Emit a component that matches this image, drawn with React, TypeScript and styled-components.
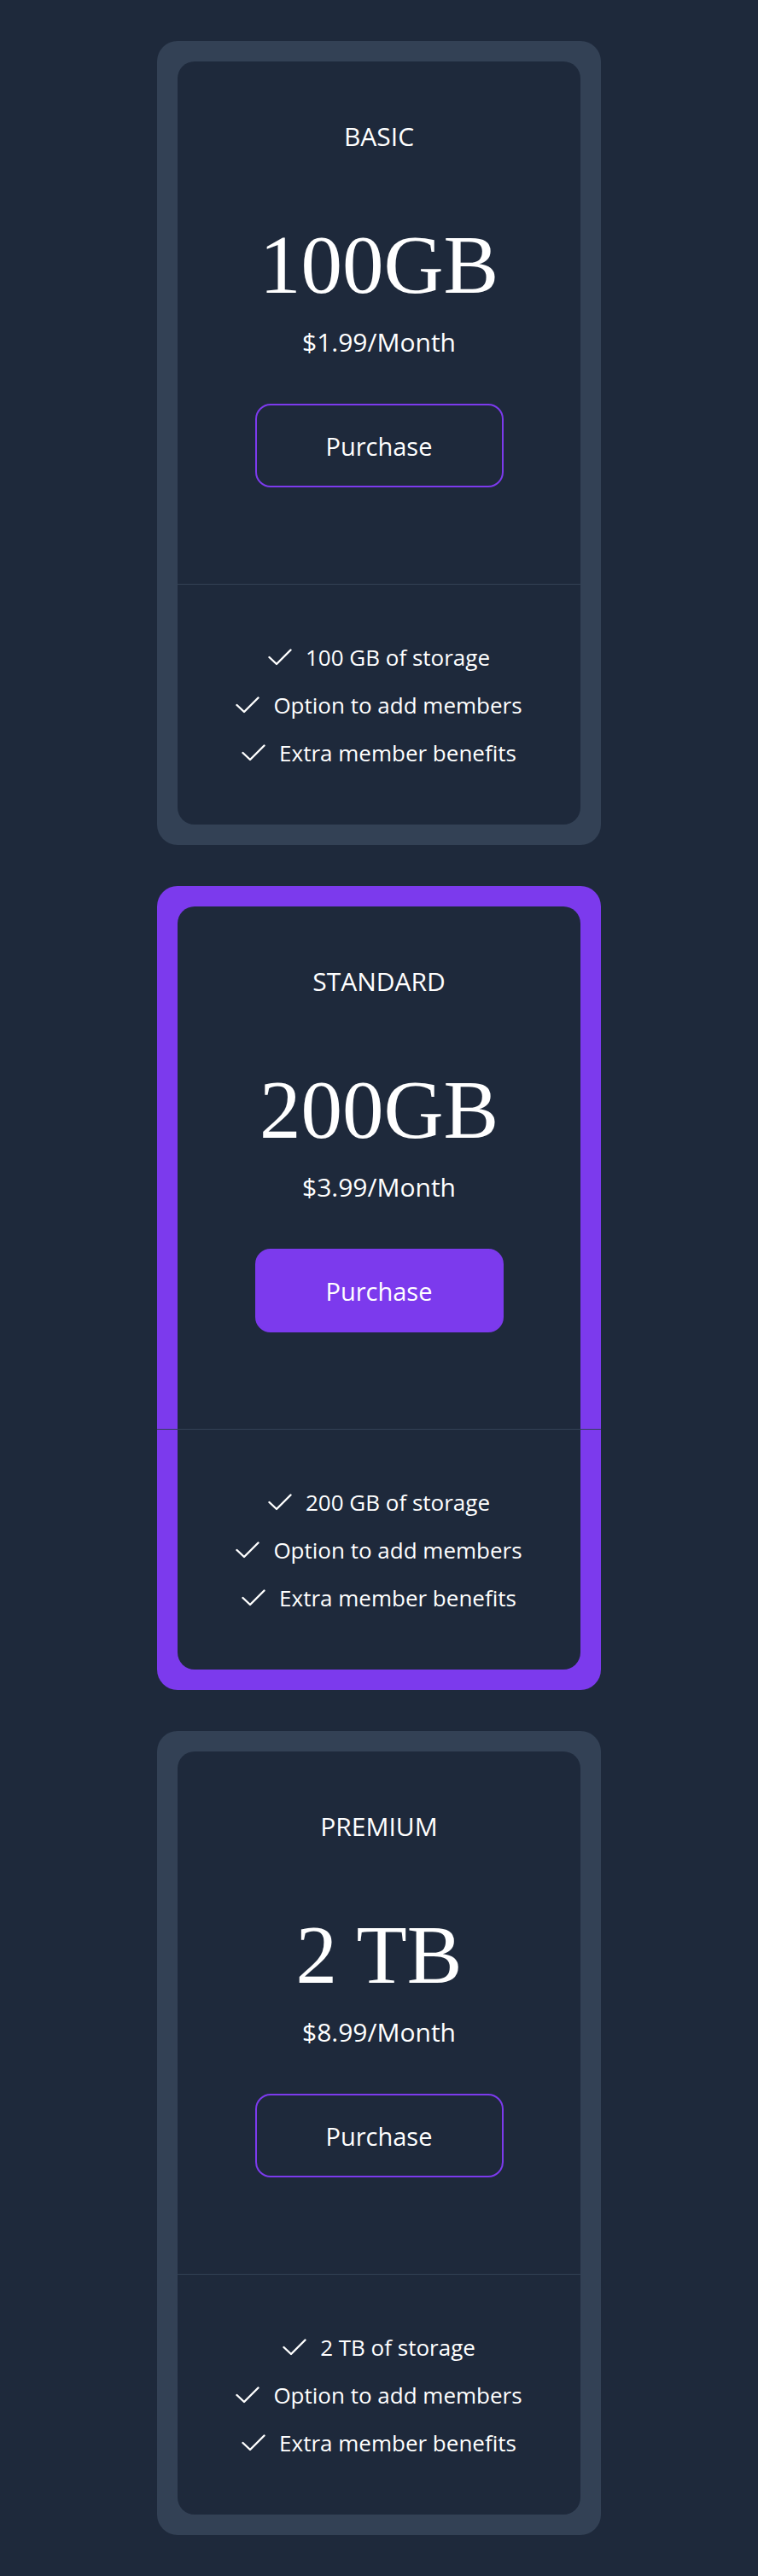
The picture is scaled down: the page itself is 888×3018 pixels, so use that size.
import React from "react";
import styled, { createGlobalStyle } from "styled-components";

const GlobalStyle = createGlobalStyle`
  html, body {
    margin: 0;
    padding: 0;
    background: #1e293b;
  }
  body {
    font-family: "Open Sans", "Noto Sans", Arial, sans-serif;
    color: #ffffff;
  }
  * { box-sizing: border-box; }
`;

const Page = styled.main`
  display: flex;
  flex-direction: column;
  align-items: center;
  gap: 48px;
  padding: 48px 0;
`;

const Card = styled.section<{ $featured?: boolean }>`
  width: 520px;
  padding: 24px;
  border-radius: 24px;
  background: ${(p) => (p.$featured ? "#7c3aed" : "#334155")};
`;

const Inner = styled.div`
  background: #1e293b;
  border-radius: 20px;
  display: flex;
  flex-direction: column;
`;

const Top = styled.div`
  display: flex;
  flex-direction: column;
  align-items: center;
  padding: 68px 0 113px;
`;

const Tier = styled.h2`
  margin: 0;
  font-size: 30px;
  line-height: 40px;
  font-weight: 400;
  text-transform: uppercase;
`;

const Amount = styled.div`
  margin-top: 83px;
  font-family: "Liberation Serif", "Times New Roman", serif;
  font-size: 97px;
  line-height: 96px;
  height: 96px;
  font-weight: 400;
  white-space: nowrap;
`;

const Price = styled.div`
  margin-top: 22px;
  font-size: 30px;
  line-height: 40px;
`;

const Button = styled.button<{ $filled?: boolean }>`
  margin-top: 52px;
  width: 291px;
  height: 98px;
  border-radius: 18px;
  border: 2px solid #7c3aed;
  background: ${(p) => (p.$filled ? "#7c3aed" : "transparent")};
  color: #ffffff;
  font-family: "Open Sans", "Noto Sans", Arial, sans-serif;
  font-size: 29px;
  cursor: pointer;
`;

const Divider = styled.hr`
  margin: 0 -24px;
  border: none;
  height: 1px;
  background: #334155;
`;

const Features = styled.ul`
  list-style: none;
  margin: 0;
  padding: 57px 0 56px;
  display: flex;
  flex-direction: column;
  align-items: center;
`;

const Feature = styled.li`
  display: flex;
  align-items: center;
  justify-content: center;
  gap: 16px;
  height: 56px;
  font-size: 26px;
  line-height: 56px;
`;

const CheckIcon = () => (
  <svg width="28" height="20" viewBox="0 0 28 20" fill="none" aria-hidden="true">
    <polyline
      points="1.5,10 10,18 26.5,1.5"
      stroke="#ffffff"
      strokeWidth="2.4"
      strokeLinecap="round"
      strokeLinejoin="round"
    />
  </svg>
);

type Plan = {
  tier: string;
  amount: string;
  price: string;
  featured?: boolean;
  features: string[];
};

const plans: Plan[] = [
  {
    tier: "Basic",
    amount: "100GB",
    price: "$1.99/Month",
    features: ["100 GB of storage", "Option to add members", "Extra member benefits"],
  },
  {
    tier: "Standard",
    amount: "200GB",
    price: "$3.99/Month",
    featured: true,
    features: ["200 GB of storage", "Option to add members", "Extra member benefits"],
  },
  {
    tier: "Premium",
    amount: "2 TB",
    price: "$8.99/Month",
    features: ["2 TB of storage", "Option to add members", "Extra member benefits"],
  },
];

export default function App() {
  return (
    <>
      <GlobalStyle />
      <Page>
        {plans.map((plan) => (
          <Card key={plan.tier} $featured={plan.featured}>
            <Inner>
              <Top>
                <Tier>{plan.tier}</Tier>
                <Amount>{plan.amount}</Amount>
                <Price>{plan.price}</Price>
                <Button $filled={plan.featured}>Purchase</Button>
              </Top>
              <Divider />
              <Features>
                {plan.features.map((f) => (
                  <Feature key={f}>
                    <CheckIcon />
                    <span>{f}</span>
                  </Feature>
                ))}
              </Features>
            </Inner>
          </Card>
        ))}
      </Page>
    </>
  );
}
